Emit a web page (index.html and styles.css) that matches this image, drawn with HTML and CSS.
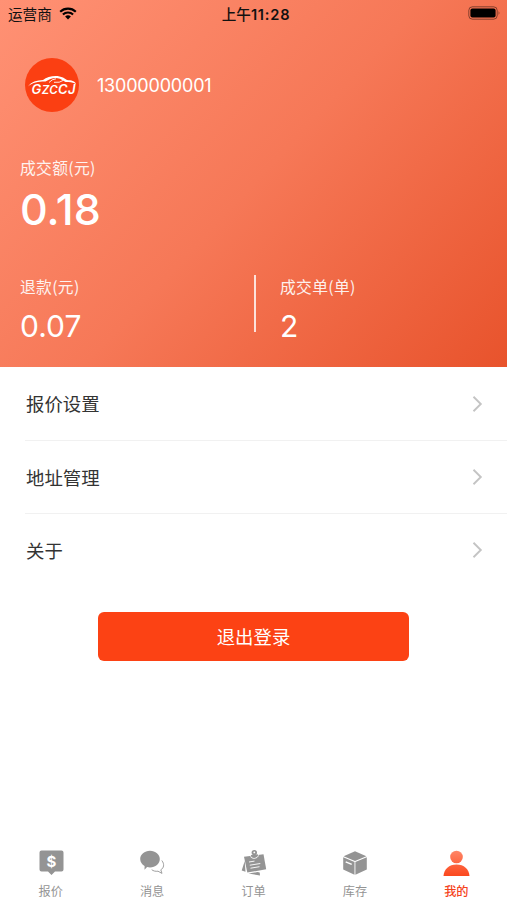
FILE: index.html
```
<!DOCTYPE html>
<html lang="zh-CN">

<head>
    <meta charset="UTF-8">
    <title>我的</title>
    <link rel="stylesheet" href="styles.css">
</head>

<body>
    <div class="header">
        <div class="statusBar">
            <div class="carrier">
                <span>运营商</span>
                <svg width="18" height="13" viewBox="0 0 18 13">
                    <path d="M1.2 4.8a11.2 11.2 0 0 1 15.6 0M3.9 7.5a7.4 7.4 0 0 1 10.2 0" fill="none" stroke="#000" stroke-width="2.1" />
                    <path d="M9 12.5l-2.9-2.9a4.2 4.2 0 0 1 5.8 0z" />
                </svg>
            </div>
            <span class="time">上午<b>11:28</b></span>
            <div class="battery">
                <svg width="33" height="14" viewBox="0 0 33 14">
                    <rect x="0.8" y="0.8" width="28.4" height="12.4" rx="3.6" fill="none" stroke="#000" stroke-opacity="0.45" />
                    <rect x="2.4" y="2.4" width="25.2" height="9.2" rx="2" />
                    <path d="M30.6 5q1.8 2 0 4z" fill-opacity="0.5" />
                </svg>
            </div>
        </div>
        <div class="user">
            <svg class="avatar" width="54" height="54" viewBox="0 0 54 54">
                <circle cx="27" cy="27" r="27" fill="#fb3f12" />
                <path d="M3 28.500C6 23.800 12 22.300 18 22C23 18 32 16.500 38 19.500L42 22C46 22.300 50.500 23 51 26C48 24.300 44 24 40.500 24L35 20.800C30 18.700 25 20.500 20.500 23.600C14 23.500 8 24.300 3 28.500z" fill="#fff" />
                <path d="M24 24.500q3-3.500 7-3.700M29 24.300q6 .7 9-1.800" fill="none" stroke="#fff" stroke-width="0.900" />
                <text class="logoText" x="6.500" y="35.500" textLength="44" lengthAdjust="spacing">G<tspan font-size="11.500">ZC</tspan>CJ</text>
            </svg>
            <span class="phone">13000000001</span>
        </div>
        <div class="total">
            <p class="label">成交额(元)</p>
            <p class="totalValue">0.18</p>
        </div>
        <div class="stats">
            <div class="stat">
                <p class="label">退款(元)</p>
                <p class="statValue">0.07</p>
            </div>
            <div class="divider"></div>
            <div class="stat">
                <p class="label">成交单(单)</p>
                <p class="statValue">2</p>
            </div>
        </div>
    </div>

    <div class="menu">
        <div class="menuItem">
            <span>报价设置</span>
            <svg class="arrow" width="11" height="18" viewBox="0 0 11 18"><path d="M1.500 1.800L8.800 9l-7.300 7.200" /></svg>
        </div>
        <div class="menuItem">
            <span>地址管理</span>
            <svg class="arrow" width="11" height="18" viewBox="0 0 11 18"><path d="M1.500 1.800L8.800 9l-7.300 7.200" /></svg>
        </div>
        <div class="menuItem">
            <span>关于</span>
            <svg class="arrow" width="11" height="18" viewBox="0 0 11 18"><path d="M1.500 1.800L8.800 9l-7.300 7.200" /></svg>
        </div>
    </div>

    <button class="logout">退出登录</button>

    <div class="tabBar">
        <div class="tab">
            <svg width="28" height="28" viewBox="0 0 28 28">
                <path d="M4.500 1.500h20a2 2 0 0 1 2 2v17a2 2 0 0 1-2 2h-6.500L14.500 26l-3.500-3.500H4.500a2 2 0 0 1-2-2v-17a2 2 0 0 1 2-2z" />
                <text class="dollar" x="14.500" y="17.500">$</text>
            </svg>
            <span>报价</span>
        </div>
        <div class="tab">
            <svg width="28" height="28" viewBox="0 0 28 28">
                <path d="M12 1.700c5.500 0 9.800 3.700 9.800 8.300s-4.300 8.400-9.800 8.400q-1.500 0-2.900-.4L6.500 20.800l.1-3.800C4 15.500 2.200 13 2.200 10c0-4.600 4.300-8.300 9.800-8.300z" />
                <path d="M23.800 11.500c3 3.700 2 7.600-1 9.300l1.200 3.600-4-2.200c-2.500.4-4.800-.3-6.300-1.500" fill="none" stroke="#949494" stroke-width="0.900" />
            </svg>
            <span>消息</span>
        </div>
        <div class="tab">
            <svg width="28" height="28" viewBox="0 0 28 28">
                <path d="M4.700 12L1.700 21.500l3.800 1.200zM8.500 24.600l9-1.500 2.200.3.300 3z" />
                <path d="M4 7.800l19.500-2.500 2.700 15-18.900 3.300z" />
                <path d="M9 13l5.500-.9M9.800 16.200l10.500-1.700M10.500 19.200l9-1.500" fill="none" stroke="#fff" stroke-width="0.900" />
                <path d="M10 5.500l8.300-1.200.3 2.900q-3.800 4.500-7.800 1.200z" fill="#fff" />
                <circle cx="14.300" cy="3.600" r="2.700" />
                <circle cx="14.300" cy="3.400" r="0.900" fill="#fff" />
                <path d="M10.800 6l7-.8.2 1.900q-3.400 3.300-6.700.8z" />
            </svg>
            <span>订单</span>
        </div>
        <div class="tab">
            <svg width="28" height="28" viewBox="0 0 28 28">
                <path d="M14 2.300l11.400 4.900L14 12 2.600 7.200z" />
                <path d="M2.200 8.300l11.300 4.700v12.700L2.200 20.500zM25.800 8.300l-11.400 4.700v12.700l11.400-5.200z" />
                <path d="M4.700 12.900l6 2.500" fill="none" stroke="#fff" stroke-width="1.500" />
            </svg>
            <span>库存</span>
        </div>
        <div class="tab active">
            <svg width="28" height="28" viewBox="0 0 28 28">
                <defs>
                    <linearGradient id="person" x1="0" y1="0" x2="0" y2="28" gradientUnits="userSpaceOnUse">
                        <stop offset="0" stop-color="#ff8a6c" />
                        <stop offset="1" stop-color="#fb451a" />
                    </linearGradient>
                </defs>
                <g fill="url(#person)">
                    <circle cx="14.500" cy="8" r="6.300" />
                    <path d="M1.500 27c.5-7 5.500-11.600 13-11.600S27 20 27.500 27z" />
                </g>
            </svg>
            <span>我的</span>
        </div>
    </div>
</body>

</html>
```

FILE: styles.css
```
* {
    box-sizing: border-box;
}

body {
    display: flex;
    flex-direction: column;
    height: 100vh;
    margin: 0;
    font-family: Inter, "Noto Sans CJK SC", sans-serif;
    background-color: #fff;
    color: #333;
}

p {
    margin: 0;
}

svg {
    display: block;
    flex: none;
}

.header {
    height: 367px;
    background: linear-gradient(133deg, #ff9174 0%, #f67857 50%, #e8532c 100%);
    color: #fff;
}

.statusBar {
    display: grid;
    grid-template-columns: 1fr auto 1fr;
    align-items: center;
    height: 26px;
    padding: 0 6px 0 8px;
    font-size: 14.6px;
    color: #111;
}

.carrier {
    display: flex;
    align-items: center;
    gap: 7px;
}

.time {
    padding-left: 3px;
    font-weight: 500;
    font-size: 14.6px;
}

.time b {
    font-weight: 600;
    letter-spacing: 0.8px;
}

.battery {
    display: flex;
    justify-content: flex-end;
}

.user {
    display: flex;
    align-items: center;
    gap: 18px;
    padding: 32px 25px 0;
}

.logoText {
    font-size: 13px;
    font-weight: 600;
    font-style: italic;
    fill: #fff;
}

.phone {
    padding-top: 1px;
    font-size: 18px;
    letter-spacing: -0.2px;
}

.total {
    padding: 44px 20px 0;
}

.label {
    font-family: "Noto Sans CJK SC", sans-serif;
    font-size: 15.8px;
    line-height: 24px;
    letter-spacing: 0.3px;
    opacity: 0.9;
}

.totalValue {
    font-size: 43px;
    font-weight: 500;
    line-height: 58px;
}

.stats {
    display: flex;
    padding: 37px 0 0 20px;
}

.stat {
    flex: none;
    width: 234px;
}

.divider {
    flex: none;
    width: 2px;
    height: 57px;
    margin-right: 24px;
    background-color: rgba(255, 255, 255, 0.8);
}

.statValue {
    font-size: 30px;
    line-height: 54px;
}

.menuItem {
    display: flex;
    justify-content: space-between;
    align-items: center;
    height: 73px;
    margin-left: 25px;
    padding-right: 24px;
    border-bottom: 1px solid #f1f1f1;
    font-size: 18.4px;
}

.menuItem span {
    padding: 0 0 1px 1px;
}

.menuItem:first-child {
    height: 74px;
}

.menuItem:last-child {
    border-bottom: none;
}

.menuItem:last-child .arrow {
    margin-bottom: 2px;
}

.arrow path {
    fill: none;
    stroke: #c4c4c4;
    stroke-width: 1.9;
}

.logout {
    width: 311px;
    height: 49px;
    margin: 25px auto 0;
    padding: 0 0 2px;
    border: none;
    border-radius: 6px;
    background-color: #fc4214;
    color: #fff;
    font-family: inherit;
    font-size: 18.4px;
}

.tabBar {
    display: flex;
    height: 51px;
    margin-top: auto;
}

.tab {
    display: flex;
    flex: 1;
    flex-direction: column;
    align-items: center;
    gap: 7px;
    font-size: 12.2px;
    line-height: 16px;
    color: #949494;
    fill: #949494;
}

.dollar {
    font-size: 15px;
    font-weight: 700;
    text-anchor: middle;
    fill: #fff;
}

.active {
    font-weight: 500;
    color: #f5431b;
}
```
